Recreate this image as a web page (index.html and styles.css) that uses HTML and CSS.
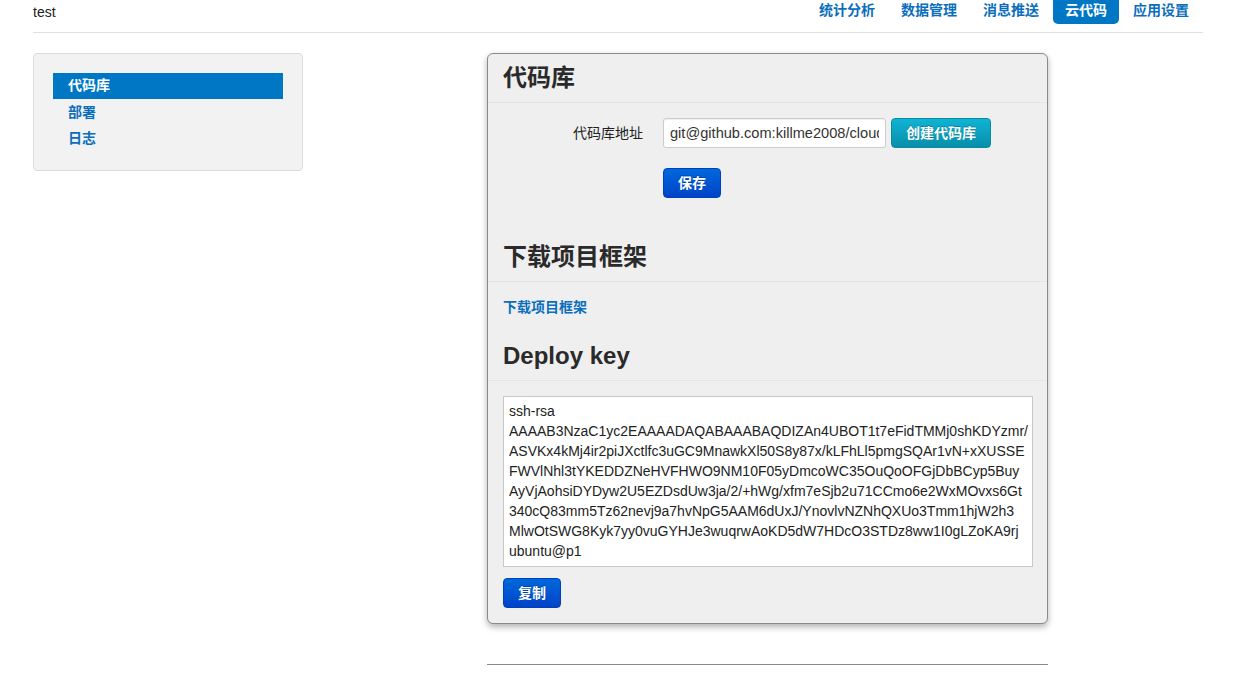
FILE: index.html
```html
<!DOCTYPE html>
<html lang="zh-CN">
<head>
<meta charset="utf-8">
<title>云代码</title>
<link rel="stylesheet" href="styles.css">
</head>
<body>
<div class="container">
  <header class="topbar">
    <div class="brand">test</div>
    <nav class="nav">
      <a class="nav-item" href="#">统计分析</a>
      <a class="nav-item" href="#">数据管理</a>
      <a class="nav-item" href="#">消息推送</a>
      <a class="nav-item active" href="#">云代码</a>
      <a class="nav-item" href="#">应用设置</a>
    </nav>
  </header>
  <div class="layout">
    <aside class="sidebar">
      <a class="side-item active" href="#">代码库</a>
      <a class="side-item" href="#">部署</a>
      <a class="side-item" href="#">日志</a>
    </aside>
    <main class="main">
      <section class="panel">
        <h2 class="panel-title">代码库</h2>
        <div class="panel-body form-body">
          <div class="form-row">
            <label class="form-label">代码库地址</label>
            <div class="controls">
              <input class="text-input" type="text" value="git@github.com:killme2008/cloudcode-demo.git">
              <button class="btn btn-info">创建代码库</button>
            </div>
          </div>
          <div class="form-row">
            <span class="form-label"></span>
            <div class="controls">
              <button class="btn btn-primary">保存</button>
            </div>
          </div>
        </div>
        <h2 class="panel-title">下载项目框架</h2>
        <div class="panel-body">
          <a class="link" href="#">下载项目框架</a>
        </div>
        <h2 class="panel-title en">Deploy key</h2>
        <div class="panel-body key-body">
          <div class="keybox">ssh-rsa<br>AAAAB3NzaC1yc2EAAAADAQABAAABAQDIZAn4UBOT1t7eFidTMMj0shKDYzmr/<br>ASVKx4kMj4ir2piJXctlfc3uGC9MnawkXl50S8y87x/kLFhLl5pmgSQAr1vN+xXUSSE<br>FWVlNhl3tYKEDDZNeHVFHWO9NM10F05yDmcoWC35OuQoOFGjDbBCyp5Buy<br>AyVjAohsiDYDyw2U5EZDsdUw3ja/2/+hWg/xfm7eSjb2u71CCmo6e2WxMOvxs6Gt<br>340cQ83mm5Tz62nevj9a7hvNpG5AAM6dUxJ/YnovlvNZNhQXUo3Tmm1hjW2h3<br>MlwOtSWG8Kyk7yy0vuGYHJe3wuqrwAoKD5dW7HDcO3STDz8ww1I0gLZoKA9rj<br>ubuntu@p1</div>
          <button class="btn btn-primary copy">复制</button>
        </div>
      </section>
      <hr class="footer-line">
    </main>
  </div>
</div>
</body>
</html>
```

FILE: styles.css
```css
* { box-sizing: border-box; }
html, body { margin: 0; padding: 0; background: #fff; }
body {
  font-family: "Liberation Sans", "Noto Sans CJK SC", sans-serif;
  font-size: 14px;
  line-height: 20px;
  color: #333;
}
a { text-decoration: none; }
.container {
  width: 1170px;
  margin-left: 33px;
}
.topbar {
  display: flex;
  justify-content: space-between;
  align-items: flex-start;
  height: 33px;
  border-bottom: 1px solid #e0e0e0;
}
.brand {
  font-size: 14px;
  line-height: 20px;
  padding-top: 2px;
  color: #222;
}
.nav {
  display: flex;
  gap: 2px;
  margin-right: 2px;
}
.nav-item {
  display: block;
  height: 24px;
  line-height: 20px;
  padding: 0 12px 4px;
  font-weight: bold;
  color: #0a6ebd;
  border-radius: 0 0 5px 5px;
}
.nav-item.active {
  background: #0077c5;
  color: #fff;
}
.layout {
  display: flex;
  margin-top: 20px;
}
.sidebar {
  width: 270px;
  flex: none;
  align-self: flex-start;
  padding: 19px;
  background: #f2f2f2;
  border: 1px solid #dcdcdc;
  border-radius: 4px;
}
.side-item {
  display: block;
  height: 26px;
  line-height: 26px;
  padding-left: 15px;
  font-size: 14px;
  font-weight: bold;
  color: #0a6ebd;
}
.side-item.active {
  background: #0077c5;
  color: #fff;
  height: 26px;
  line-height: 25px;
}
.main {
  flex: 1;
  display: flex;
  flex-direction: column;
  align-items: center;
  padding-left: 29px;
}
.panel {
  width: 561px;
  background: #efefef;
  border: 1px solid #8a8a8a;
  border-radius: 6px;
  box-shadow: 0 3px 6px rgba(0, 0, 0, 0.3);
}
.panel-title {
  margin: 0;
  padding: 10px 15px;
  font-size: 24px;
  line-height: 28px;
  font-weight: bold;
  color: #2a2a2a;
  border-bottom: 1px solid #e4e4e4;
}
.panel-body {
  padding: 15px;
}
.form-body {
  padding-bottom: 35px;
}
.form-row {
  display: flex;
  align-items: center;
  gap: 20px;
}
.form-row + .form-row { margin-top: 20px; }
.form-label {
  width: 140px;
  flex: none;
  text-align: right;
  font-weight: normal;
  color: #222;
}
.controls {
  display: flex;
  align-items: center;
  gap: 5px;
}
.text-input {
  width: 223px;
  height: 30px;
  padding: 4px 6px;
  border: 1px solid #ccc;
  border-radius: 3px;
  background: #fff;
  font-family: "Liberation Sans", "Noto Sans CJK SC", sans-serif;
  font-size: 14.6px;
  color: #333;
  box-shadow: inset 0 1px 1px rgba(0,0,0,0.06);
}
.btn {
  height: 30px;
  padding: 0 14px;
  border-radius: 4px;
  font-family: "Liberation Sans", "Noto Sans CJK SC", sans-serif;
  font-size: 14px;
  font-weight: bold;
  color: #fff;
  line-height: 28px;
  text-shadow: 0 -1px 0 rgba(0,0,0,0.25);
  cursor: pointer;
}
.btn-primary {
  background: linear-gradient(#0068dc, #0043c8);
  border: 1px solid #0040b8;
}
.btn-info {
  background: linear-gradient(#10b4d4, #078ea9);
  border: 1px solid #078aa4;
}
.link {
  font-size: 14px;
  font-weight: bold;
  color: #0a6ebd;
}
.key-body { padding-bottom: 15px; }
.keybox {
  width: 530px;
  height: 171px;
  padding: 4px 5px;
  background: #fff;
  border: 1px solid #c8c8c8;
  font-size: 14px;
  line-height: 20px;
  color: #222;
  overflow: hidden;
}
.copy {
  margin-top: 11px;
  display: block;
}
.footer-line {
  width: 561px;
  margin: 40px 0 0;
  border: 0;
  border-top: 1px solid #8a8a8a;
}
```
